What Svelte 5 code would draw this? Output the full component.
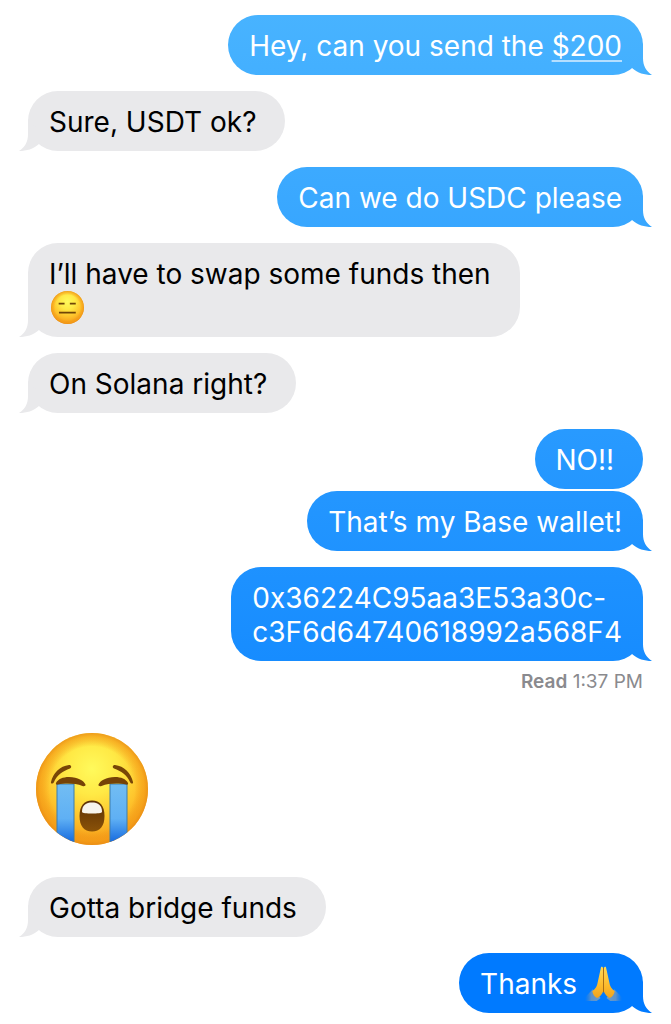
<script>
  const messages = [
    { from: "me", text: "Hey, can you send the ", link: "$200", tail: true },
    { from: "them", text: "Sure, USDT ok? ", tail: true },
    { from: "me", text: "Can we do USDC please", tail: true },
    { from: "them", text: "I’ll have to swap some funds then \n", emoji: "flat", tail: true },
    { from: "them", text: "On Solana right? ", tail: true },
    { from: "me", text: "NO!! " },
    { from: "me", text: "That’s my Base wallet!", tail: true, grouped: true },
    {
      from: "me",
      text: "0x36224C95aa3E53a30c-\nc3F6d64740618992a568F4",
      tail: true,
      read: "1:37 PM",
    },
    { from: "them", sticker: true },
    { from: "them", text: "Gotta bridge funds ", tail: true },
    { from: "me", text: "Thanks ", emoji: "hands", tail: true },
  ];
</script>

<svg class="defs" aria-hidden="true">
  <defs>
    <radialGradient id="face" cx="0.5" cy="0.32" r="0.66">
      <stop offset="0" stop-color="#fffa5c" />
      <stop offset="0.35" stop-color="#ffe945" />
      <stop offset="0.7" stop-color="#fec22b" />
      <stop offset="1" stop-color="#f49a18" />
    </radialGradient>
    <radialGradient id="rim" cx="0.5" cy="0.5" r="0.5">
      <stop offset="0.76" stop-color="#f08c10" stop-opacity="0" />
      <stop offset="0.93" stop-color="#f39a16" stop-opacity="0.6" />
      <stop offset="1" stop-color="#e98c14" stop-opacity="0.8" />
    </radialGradient>
    <linearGradient id="tear" x1="0" y1="0" x2="0" y2="1">
      <stop offset="0" stop-color="#72bdf3" />
      <stop offset="0.55" stop-color="#5fb0f4" />
      <stop offset="0.9" stop-color="#1b6fe0" />
      <stop offset="1" stop-color="#1367dc" />
    </linearGradient>
    <linearGradient id="brown" x1="0" y1="0" x2="0" y2="1">
      <stop offset="0" stop-color="#5c3005" />
      <stop offset="1" stop-color="#8a5208" />
    </linearGradient>
    <linearGradient id="skin" x1="0" y1="0" x2="0" y2="1">
      <stop offset="0" stop-color="#ffd957" />
      <stop offset="0.6" stop-color="#fdbb2c" />
      <stop offset="1" stop-color="#f0a31d" />
    </linearGradient>
    <linearGradient id="cuff-left" x1="1" y1="0" x2="0" y2="0">
      <stop offset="0" stop-color="#6f9cc4" />
      <stop offset="0.6" stop-color="#5a92cc" />
      <stop offset="1" stop-color="#3b82d0" stop-opacity="0" />
    </linearGradient>
    <linearGradient id="cuff-right" x1="0" y1="0" x2="1" y2="0">
      <stop offset="0" stop-color="#6f9cc4" />
      <stop offset="0.6" stop-color="#5a92cc" />
      <stop offset="1" stop-color="#3b82d0" stop-opacity="0" />
    </linearGradient>
    <clipPath id="head"><circle cx="56" cy="56" r="56" /></clipPath>
  </defs>
</svg>

<main>
  <ol>
    {#each messages as message}
      <li class={message.from} class:grouped={message.grouped}>
        {#if message.sticker}
          <svg class="sticker" viewBox="0 0 112 112" role="img" aria-label="Loudly crying face">
            <circle cx="56" cy="56" r="56" fill="url(#face)" />
            <circle cx="56" cy="56" r="56" fill="url(#rim)" />
            <path
              d="M15 49C17 40 24 33 33 32C35.500 32 36 34.500 34 35.500C27 38 21 42 18 49C17 51 14.500 51 15 49Z"
              fill="#784507"
            />
            <path
              d="M97 49C95 40 88 33 79 32C76.500 32 76 34.500 78 35.500C85 38 91 42 94 49C95 51 97.500 51 97 49Z"
              fill="#784507"
            />
            <g clip-path="url(#head)">
              <path d="M21 51H38V114H21Z" fill="url(#tear)" stroke="#3c7dab" />
              <path d="M74 51H91V114H74Z" fill="url(#tear)" stroke="#3c7dab" />
            </g>
            <path
              d="M20 50C22 46 27 44 33 44C42 44 48 48 49.500 51.500C50 53 48 53.500 46.500 53C39 50 29 50 22 51.500C20.500 52 19.500 51.200 20 50Z"
              fill="#754207"
            />
            <path
              d="M92 50C90 46 85 44 79 44C70 44 64 48 62.500 51.500C62 53 64 53.500 65.500 53C73 50 83 50 90 51.500C91.500 52 92.500 51.200 92 50Z"
              fill="#754207"
            />
            <path
              d="M56 67.500C64 67.500 68.500 73 68.500 83C68.500 93 64 98.500 56 98.500S43.500 93 43.500 83C43.500 73 48 67.500 56 67.500Z"
              fill="url(#brown)"
            />
            <path d="M46 79C46 72 50 69.500 56 69.500S66 72 66 79C66 81 46 81 46 79Z" fill="#f7f4ed" />
          </svg>
        {:else}
          <div class="bubble">
            <p>{message.text}{#if message.link}<a href="#pay">{message.link}</a>{/if}{#if message.emoji === "flat"}<svg class="emoji flat" viewBox="0 0 112 112" role="img" aria-label="Expressionless face">
                <circle cx="56" cy="56" r="56" fill="url(#face)" />
                <circle cx="56" cy="56" r="56" fill="url(#rim)" />
                <path d="M26 43H46M64 43H84M27 73H84" stroke="#704507" stroke-width="6" />
              </svg>{:else if message.emoji === "hands"}<svg class="emoji hands" viewBox="0 0 38 38" role="img" aria-label="Folded hands">
                <path d="M8 25L16 34L12 37H0L0 33Z" fill="url(#cuff-left)" />
                <path d="M30 25L22 34L26 37H38L38 33Z" fill="url(#cuff-right)" />
                <path
                  d="M16.500 2C17.500 1.500 18.500 2 18.700 3.500L19 26C18 30 15 33 12.500 34C10 33 8 30 7.500 27C11 24 12.500 22 13 18Z"
                  fill="url(#skin)"
                />
                <path
                  d="M21.500 2C20.500 1.500 19.500 2 19.300 3.500L19 26C20 30 23 33 25.500 34C28 33 30 30 30.500 27C27 24 25.500 22 25 18Z"
                  fill="url(#skin)"
                />
                <path d="M19 3V28" stroke="#a96c14" />
              </svg>{/if}</p>
            {#if message.tail}
              <span class="tail"></span>
            {/if}
          </div>
          {#if message.read}
            <small><b>Read</b> {message.read}</small>
          {/if}
        {/if}
      </li>
    {/each}
  </ol>
</main>

<style>
  :global(body) {
    margin: 0;
    background: #fff;
  }
  main {
    --mine: linear-gradient(#49b4ff, #007aff 960px) fixed;
    --theirs: #e9e9eb;
    padding: 15px 28px 11px;
    font-family: Inter, "Liberation Sans", sans-serif;
    font-size: 28px;
    line-height: 34px;
  }
  ol {
    display: flex;
    flex-direction: column;
    gap: 16px;
    margin: 0;
    padding: 0;
    list-style: none;
  }
  li {
    display: flex;
    flex-direction: column;
    align-items: flex-start;
  }
  li.me {
    align-items: flex-end;
  }
  li.grouped {
    margin-top: -14px;
  }
  .bubble {
    position: relative;
    padding: 14px 21px 12px;
    border-radius: 30px;
    background: var(--theirs);
    color: #000;
    font-weight: 370;
  }
  .me .bubble {
    background: var(--mine);
    color: #fff;
  }
  p {
    margin: 0;
    white-space: pre;
  }
  a {
    color: inherit;
    text-decoration: underline;
    text-decoration-color: #b5dfff;
    text-decoration-thickness: 2px;
    text-underline-offset: 4px;
    text-decoration-skip-ink: none;
  }
  .tail {
    position: absolute;
    bottom: 0;
    left: -9px;
    width: 22px;
    height: 32px;
    background: var(--theirs);
    clip-path: path("M9 0V15C9 23 6 28 0 32C8 32 14 30 20 25L22 14Z");
  }
  .me .tail {
    right: -9px;
    left: auto;
    background: var(--mine);
    clip-path: path("M13 0V15C13 23 16 28 22 32C14 32 8 30 2 25L0 14Z");
  }
  .emoji {
    width: 33px;
    height: 33px;
    margin: 0 2px;
    vertical-align: -6px;
  }
  .hands {
    width: 37px;
    height: 37px;
    margin: -2px 0;
  }
  small {
    margin-top: 10px;
    color: #8a8a8e;
    font-size: 19px;
    line-height: 22px;
  }
  b {
    font-weight: 600;
  }
  .sticker {
    width: 112px;
    height: 112px;
    margin: 24px 8px 16px;
  }
  .defs {
    position: absolute;
    width: 0;
    height: 0;
  }
</style>
